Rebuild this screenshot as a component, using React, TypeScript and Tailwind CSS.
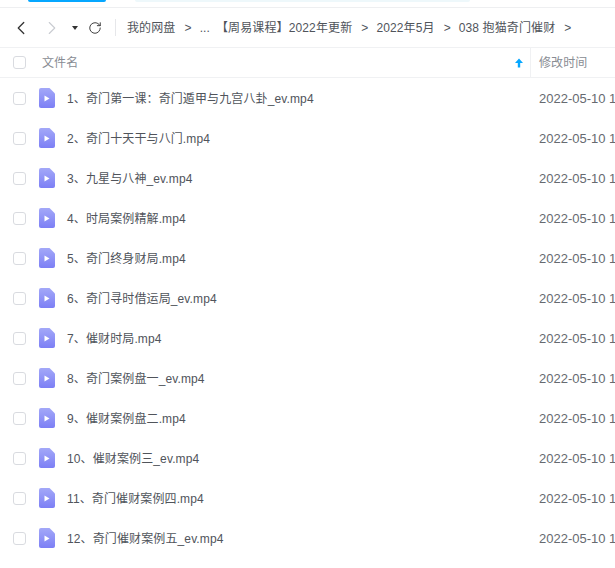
import React from 'react';
import { ChevronLeft, ChevronRight, RotateCw } from 'lucide-react';

const files = [
  '1、奇门第一课：奇门遁甲与九宫八卦_ev.mp4',
  '2、奇门十天干与八门.mp4',
  '3、九星与八神_ev.mp4',
  '4、时局案例精解.mp4',
  '5、奇门终身财局.mp4',
  '6、奇门寻时借运局_ev.mp4',
  '7、催财时局.mp4',
  '8、奇门案例盘一_ev.mp4',
  '9、催财案例盘二.mp4',
  '10、催财案例三_ev.mp4',
  '11、奇门催财案例四.mp4',
  '12、奇门催财案例五_ev.mp4',
];

const crumbs = ['【周易课程】2022年更新', '2022年5月', '038 抱猫奇门催财'];

const FileIcon = () => (
  <svg width="16" height="20" viewBox="0 0 16 20" className="shrink-0">
    <defs>
      <linearGradient id="fileGrad" x1="0" y1="0" x2="0" y2="1">
        <stop offset="0" stopColor="#a3a8f8" />
        <stop offset="1" stopColor="#7c7ff5" />
      </linearGradient>
    </defs>
    <path d="M2 0H10.5L16 5.5V18a2 2 0 0 1-2 2H2a2 2 0 0 1-2-2V2a2 2 0 0 1 2-2z" fill="url(#fileGrad)" />
    <path d="M5.5 7.5 10.5 10.5 5.5 13.5z" fill="#fff" />
  </svg>
);

const Checkbox = () => (
  <div className="w-[13px] h-[13px] rounded-[3px] border border-[#d9dbe0] bg-white shrink-0" />
);

export default function App() {
  return (
    <div className="w-[615px] h-[568px] overflow-hidden bg-white text-[12px] tracking-[0.12px] text-[#50545b] font-['Liberation_Sans','Noto_Sans_CJK_SC',sans-serif]">
      {/* top strip left over from the toolbar */}
      <div className="h-2 border-b border-[#eeeff1] flex items-start">
        <div className="ml-[28px] w-[78px] h-[2px] rounded-b-full bg-[#06a7ff]" />
        <div className="ml-[29px] w-[335px] h-[2px] rounded-b-full bg-[#eef8fb]" />
      </div>

      {/* breadcrumb */}
      <div className="h-[40px] flex items-center border-b border-[#f0f1f3] whitespace-nowrap">
        <ChevronLeft className="ml-[10px] w-[22px] h-[22px] text-[#333]" strokeWidth={1.4} />
        <ChevronRight className="ml-[9px] w-[22px] h-[22px] text-[#c9ccd1]" strokeWidth={1.2} />
        <div className="ml-[9px] w-0 h-0 border-x-[3px] border-x-transparent border-t-[4px] border-t-[#333]" />
        <RotateCw className="ml-[10px] w-[14px] h-[14px] text-[#333]" strokeWidth={1.6} />
        <div className="ml-[13px] w-px h-[17px] bg-[#e6e7ea]" />
        <span className="ml-[11px]">我的网盘</span>
        <span className="ml-[9px]">&gt;</span>
        <span className="ml-[8px]">...</span>
        {crumbs.map((c, i) => (
          <React.Fragment key={c}>
            <span className={i === 0 ? 'ml-[6px]' : 'ml-[8px]'}>{c}</span>
            <span className="ml-[9px]">&gt;</span>
          </React.Fragment>
        ))}
      </div>

      {/* header */}
      <div className="h-[30px] flex items-center border-b border-[#f0f1f3] text-[#888c93] whitespace-nowrap">
        <div className="ml-[13px]"><Checkbox /></div>
        <span className="ml-[16px] flex-1">文件名</span>
        <svg width="8" height="10" viewBox="0 0 8 9" className="mr-[7px]">
          <path d="M4 0 8 4.5H5.2V9H2.8V4.5H0z" fill="#06a7ff" />
        </svg>
        <div className="w-[85px] h-full border-l border-[#f0f1f3] pl-[8px] flex items-center">修改时间</div>
      </div>

      {/* rows */}
      <div>
        {files.map((name) => (
          <div key={name} className="h-[40px] flex items-center whitespace-nowrap">
            <div className="ml-[13px]"><Checkbox /></div>
            <div className="ml-[13px]"><FileIcon /></div>
            <span className="ml-[12px] pt-[2px] flex-1">{name}</span>
            <span className="w-[76px] pt-[2px] overflow-hidden text-[13px] tracking-normal text-[#666a70]">2022-05-10 14:20</span>
          </div>
        ))}
      </div>
    </div>
  );
}
